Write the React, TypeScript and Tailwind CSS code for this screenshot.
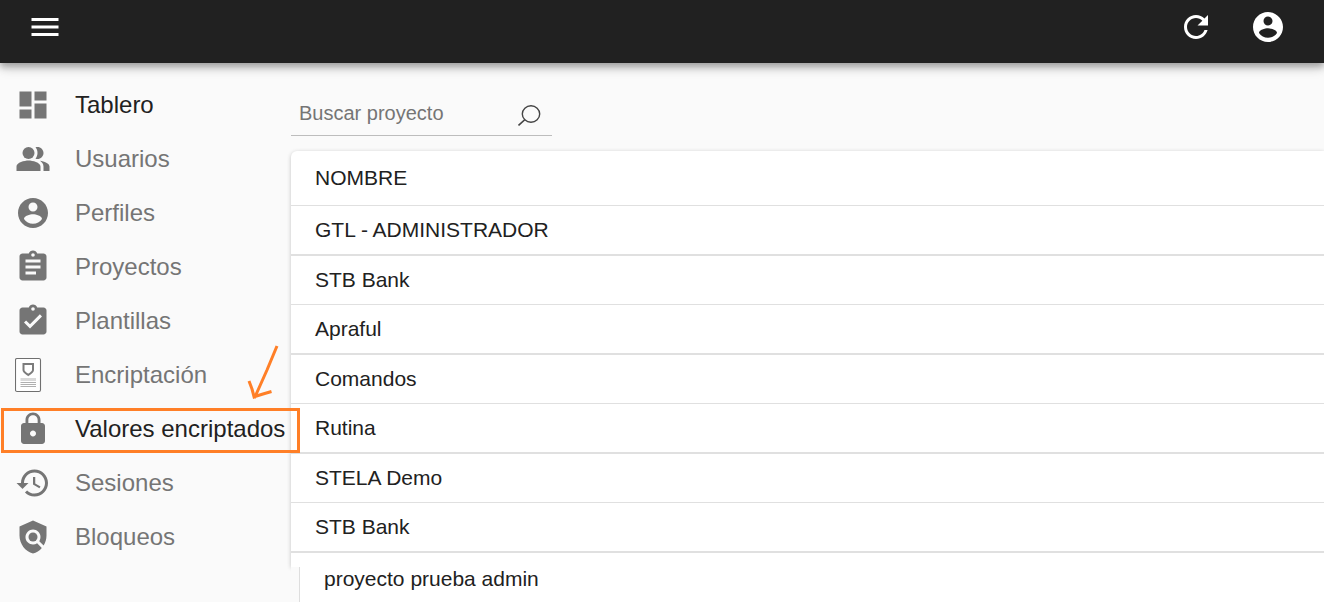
import type { ReactNode } from "react";

function Icon({ d, children }: { d?: string; children?: ReactNode }) {
  return (
    <svg viewBox="0 0 24 24" className="size-9 shrink-0 fill-current" aria-hidden="true">
      {d ? <path d={d} /> : children}
    </svg>
  );
}

const ACCOUNT =
  "M12 2C6.48 2 2 6.48 2 12s4.48 10 10 10 10-4.480 10-10S17.520 2 12 2zm0 3c1.660 0 3 1.340 3 3s-1.340 3-3 3-3-1.340-3-3 1.340-3 3-3zm0 14.200c-2.500 0-4.710-1.280-6-3.220.03-1.990 4-3.080 6-3.080 1.990 0 5.970 1.090 6 3.080-1.290 1.940-3.500 3.220-6 3.220z";
const MENU = "M3 18h18v-2H3v2zm0-5h18v-2H3v2zm0-7v2h18V6H3z";
const REFRESH =
  "M17.65 6.35C16.2 4.9 14.21 4 12 4c-4.42 0-7.99 3.58-7.99 8s3.57 8 7.99 8c3.73 0 6.84-2.55 7.73-6h-2.08c-.82 2.33-3.04 4-5.65 4-3.31 0-6-2.69-6-6s2.690-6 6-6c1.660 0 3.140.69 4.220 1.780L13 11h7V4l-2.350 2.350z";
const DASHBOARD = "M3 13h8V3H3v10zm0 8h8v-6H3v6zm10 0h8V11h-8v10zm0-18v6h8V3h-8z";
const CLIPBOARD =
  "M19 3h-4.180C14.400 1.840 13.300 1 12 1c-1.300 0-2.400.84-2.820 2H5c-1.100 0-2 .9-2 2v14c0 1.100.9 2 2 2h14c1.100 0 2-.9 2-2V5c0-1.100-.9-2-2-2zM12 2.800a1.200 1.200 0 1 1 0 2.400a1.200 1.200 0 1 1 0-2.400z";
const LINES = "M14 17H7v-2h7v2zm3-4H7v-2h10v2zm0-4H7V7h10v2z";
const CHECK = "M10 17l-4-4 1.410-1.410L10 14.170l6.590-6.590L18 9l-8 8z";
const LOCK =
  "M18 8h-1V6c0-2.760-2.240-5-5-5S7 3.240 7 6v2H6c-1.100 0-2 .9-2 2v10c0 1.100.9 2 2 2h12c1.100 0 2-.9 2-2V10c0-1.100-.9-2-2-2zm-6 9c-1.100 0-2-.9-2-2s.9-2 2-2 2 .9 2 2-.9 2-2 2zm3.100-9H8.900V6c0-1.710 1.390-3.100 3.100-3.100 1.710 0 3.100 1.390 3.100 3.100v2z";
const HISTORY =
  "M13 3c-4.970 0-9 4.030-9 9H1l3.890 3.890.07.14L9 12H6c0-3.870 3.130-7 7-7s7 3.130 7 7-3.130 7-7 7c-1.930 0-3.680-.79-4.940-2.060l-1.420 1.420C8.270 19.990 10.510 21 13 21c4.970 0 9-4.030 9-9s-4.030-9-9-9zm-1 5v5l4.280 2.540.72-1.210-3.500-2.080V8H12z";
const POLICY =
  "M21 5l-9-4-9 4v6c0 5.550 3.840 10.740 9 12 2.300-.56 4.330-1.900 5.880-3.710l-3.120-3.120c-1.940 1.290-4.580 1.070-6.290-.64-1.950-1.950-1.950-5.120 0-7.070 1.950-1.950 5.120-1.950 7.070 0 1.710 1.710 1.920 4.350.64 6.290l2.900 2.900C20.290 15.690 21 13.380 21 11V5z";

function ClipboardIcon({ mark }: { mark: string }) {
  return (
    <svg viewBox="0 0 24 24" className="size-9 shrink-0 fill-current" aria-hidden="true">
      <path fillRule="evenodd" d={CLIPBOARD} />
      <path fill="#fafafa" d={mark} />
    </svg>
  );
}

function PeopleIcon() {
  return (
    <Icon>
      <path d="M16.670 13.130C18.040 14.060 19 15.320 19 17v3h4v-3c0-2.180-3.570-3.470-6.330-3.870z" />
      <circle cx="9" cy="8" r="4" />
      <path d="M15 12c2.210 0 4-1.790 4-4s-1.790-4-4-4c-.47 0-.91.1-1.330.24C14.500 5.270 15 6.580 15 8s-.5 2.730-1.330 3.760c.42.14.86.24 1.330.24zM9 13c-2.670 0-8 1.340-8 4v3h16v-3c0-2.660-5.330-4-8-4z" />
    </Icon>
  );
}

function PolicyIcon() {
  return (
    <Icon>
      <path d={POLICY} />
      <circle cx="12" cy="12" r="3" />
    </Icon>
  );
}

function DocumentIcon() {
  return (
    <svg viewBox="0 0 36 36" className="size-9 shrink-0" fill="none" aria-hidden="true">
      <rect x="0.5" y="1.500" width="25" height="33" rx="1.500" fill="#fff" stroke="#6f6f6f" strokeWidth="1.100" />
      <path d="M8.500 7h9.500v6c0 2-2.300 3.300-4.750 5-2.450-1.700-4.750-3-4.750-5z" stroke="#7c7c7c" strokeWidth="2" />
      <path d="M5.500 22.500h15.500" stroke="#d9d9d9" strokeWidth="3" />
      <path d="M5.500 25.500h15.500M5.500 27.500h15.500M5.500 29.500h15.500" stroke="#b0b0b0" strokeWidth="1" />
    </svg>
  );
}

type Item = { label: string; icon: ReactNode; strong?: boolean; marked?: boolean };

const items: Item[] = [
  { label: "Tablero", icon: <Icon d={DASHBOARD} />, strong: true },
  { label: "Usuarios", icon: <PeopleIcon /> },
  { label: "Perfiles", icon: <Icon d={ACCOUNT} /> },
  { label: "Proyectos", icon: <ClipboardIcon mark={LINES} /> },
  { label: "Plantillas", icon: <ClipboardIcon mark={CHECK} /> },
  { label: "Encriptación", icon: <DocumentIcon /> },
  { label: "Valores encriptados", icon: <Icon d={LOCK} />, strong: true, marked: true },
  { label: "Sesiones", icon: <Icon d={HISTORY} /> },
  { label: "Bloqueos", icon: <PolicyIcon /> },
];

const projects = ["GTL - ADMINISTRADOR", "STB Bank", "Apraful", "Comandos", "Rutina", "STELA Demo", "STB Bank"];

function Highlight() {
  return (
    <>
      <span className="pointer-events-none absolute top-1.5 left-px z-10 h-[45px] w-[299px] border-3 border-[#ff7f27]" />
      <svg
        viewBox="0 0 34 58"
        className="pointer-events-none absolute -top-[58px] left-[246px] z-10 h-[58px] w-[34px]"
        fill="none"
        stroke="#ff7f27"
        strokeWidth="3"
        strokeLinejoin="round"
        aria-hidden="true"
      >
        <path d="M31 2L21 26 8.500 54M3 37l3 8 2.500 9.500M9 52.500l8-2.500 8.500-2.500" />
      </svg>
    </>
  );
}

export default function App() {
  return (
    <div className="flex min-h-screen flex-col overflow-x-hidden bg-[#fafafa] font-['Liberation_Sans',Arial,sans-serif] text-[#212121]">
      <header className="relative z-20 flex h-[63px] items-start justify-between bg-[#212121] pt-[9px] pr-[38px] pl-[27px] text-white shadow-[0_3px_6px_0_rgba(0,0,0,0.2),0_6px_8px_rgba(0,0,0,0.14),0_2px_15px_rgba(0,0,0,0.12)]">
        <button type="button" aria-label="Menú">
          <Icon d={MENU} />
        </button>
        <div className="flex gap-9">
          <button type="button" aria-label="Actualizar">
            <Icon d={REFRESH} />
          </button>
          <button type="button" aria-label="Cuenta">
            <Icon d={ACCOUNT} />
          </button>
        </div>
      </header>

      <div className="flex flex-1">
        <nav className="w-[291px] shrink-0 pt-[15px]">
          <ul>
            {items.map((item) => (
              <li key={item.label} className="relative">
                <a
                  href="#"
                  className={
                    item.strong
                      ? "flex h-[54px] items-center gap-6 pl-[15px] text-2xl whitespace-nowrap"
                      : "flex h-[54px] items-center gap-6 pl-[15px] text-2xl whitespace-nowrap text-[#757575]"
                  }
                >
                  <span className="text-[#757575]">{item.icon}</span>
                  {item.label}
                </a>
                {item.marked && <Highlight />}
              </li>
            ))}
          </ul>
        </nav>

        <main className="flex min-w-0 flex-1 flex-col pt-7">
          <div className="flex h-[45px] w-[261px] items-center border-b border-[#bdbdbd] pr-[10px] pl-2">
            <input
              type="text"
              aria-label="Buscar proyecto"
              placeholder="Buscar proyecto"
              className="min-w-0 flex-1 bg-transparent text-xl outline-none placeholder:text-[#757575]"
            />
            <button type="button" aria-label="Buscar" className="pt-1">
              <svg viewBox="0 0 24 24" className="size-6" fill="none" stroke="#444" strokeWidth="1.400" aria-hidden="true">
                <ellipse cx="13" cy="11" rx="8.700" ry="8.200" />
                <path d="M7 16.500L0.500 22.500" strokeWidth="1.700" />
              </svg>
            </button>
          </div>

          <div className="mt-[15px] rounded-tl-md bg-white pb-[14px] shadow-[0_1px_4px_rgba(0,0,0,0.22)]">
            <table className="w-full border-separate border-spacing-0 text-left text-[21px] leading-6">
              <thead>
                <tr>
                  <th className="h-[55px] border-b border-[#e0e0e0] px-6 font-normal">NOMBRE</th>
                </tr>
              </thead>
              <tbody>
                {projects.map((name, i) => (
                  <tr key={i}>
                    <td
                      className={
                        i % 2 === 0
                          ? "h-[50px] border-b-2 border-[#e0e0e0] px-6"
                          : "h-[49px] border-b border-[#e0e0e0] px-6"
                      }
                    >
                      {name}
                    </td>
                  </tr>
                ))}
              </tbody>
            </table>
          </div>
          <div className="relative flex flex-1 bg-[#fafafa] pl-2">
            <div className="flex-1 border-l border-[#dedede] bg-white px-6 text-[21px] leading-6">
              proyecto prueba admin
            </div>
          </div>
        </main>
      </div>
    </div>
  );
}
